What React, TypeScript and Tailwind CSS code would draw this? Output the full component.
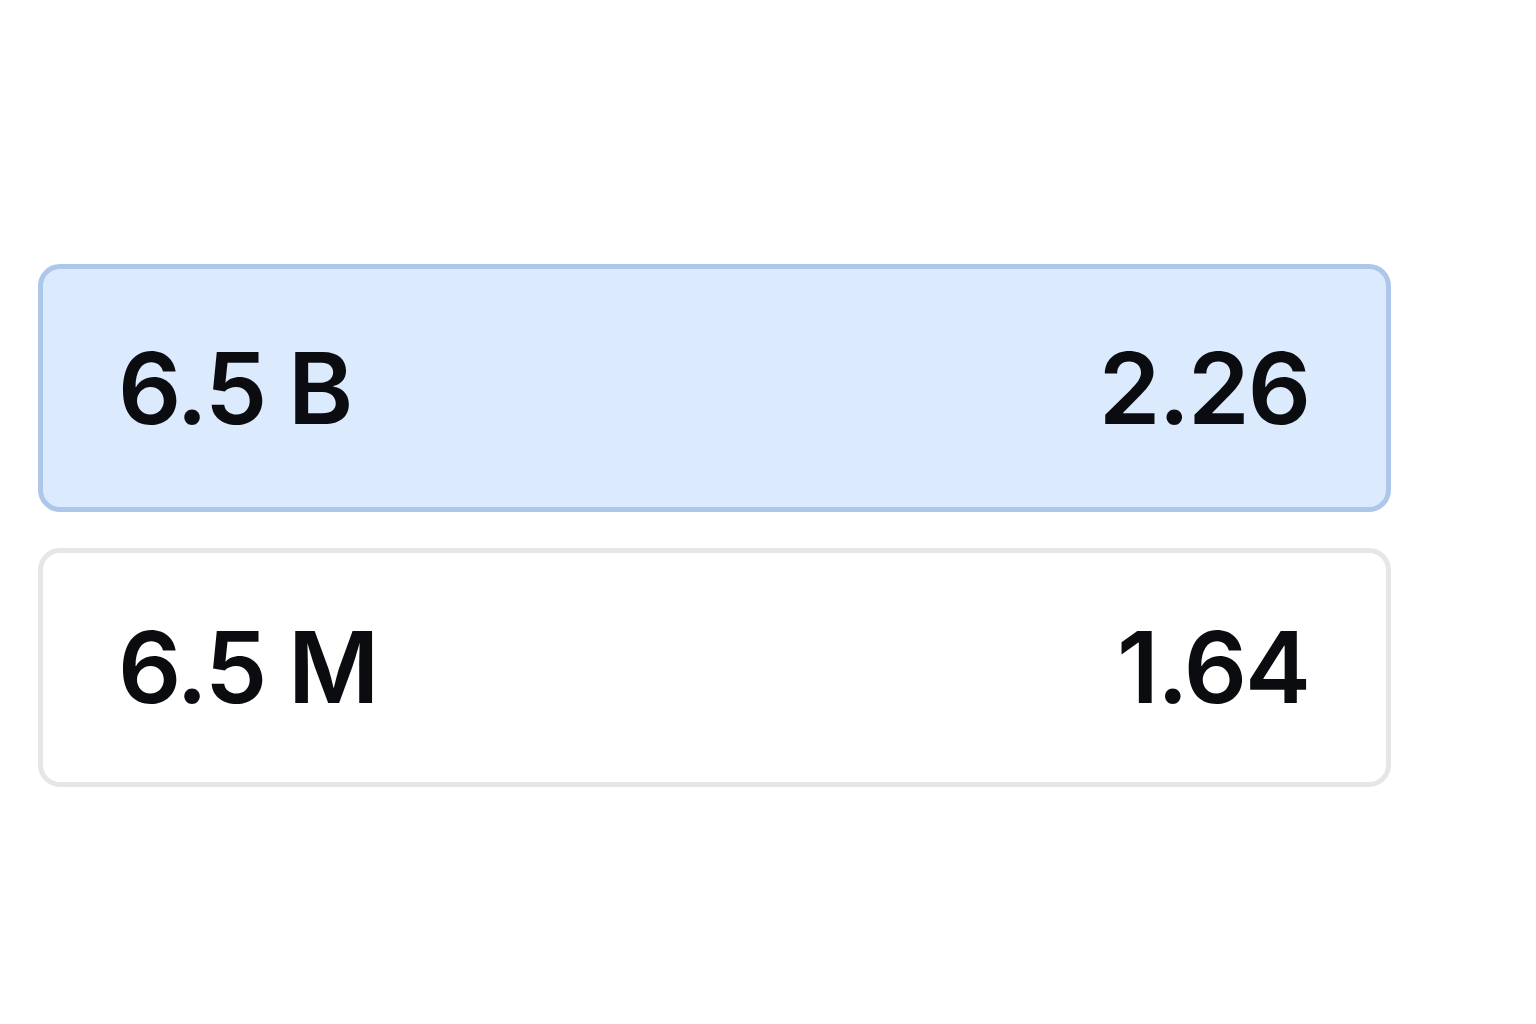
import React from 'react';

interface Row {
    label: string;
    value: string;
    selected: boolean;
}

const rows: Row[] = [
    { label: '6.5 B', value: '2.26', selected: true },
    { label: '6.5 M', value: '1.64', selected: false },
];

const App: React.FC = () => {
    return (
        <div className="min-h-screen w-full bg-white pt-[264px] pl-[38px] font-['Inter','Liberation_Sans',sans-serif] text-[#0b0c10]">
            <div className="flex w-[1353px] flex-col gap-[36px]">
                {rows.map(row => (
                    <div
                        key={row.label}
                        className={
                            row.selected
                                ? 'flex h-[248px] items-center justify-between rounded-[22px] border-[5px] border-[#adc7eb] bg-[#dbeafd] pl-[75px] pr-[77px]'
                                : 'flex h-[239px] items-center justify-between rounded-[22px] border-[5px] border-[#e6e6e6] bg-white pl-[75px] pr-[77px]'
                        }
                    >
                        <span className="text-[99px] font-semibold leading-none tracking-[-2px]">{row.label}</span>
                        <span className="text-[99px] font-semibold leading-none tracking-[-2px]">{row.value}</span>
                    </div>
                ))}
            </div>
        </div>
    );
};

export default App;
